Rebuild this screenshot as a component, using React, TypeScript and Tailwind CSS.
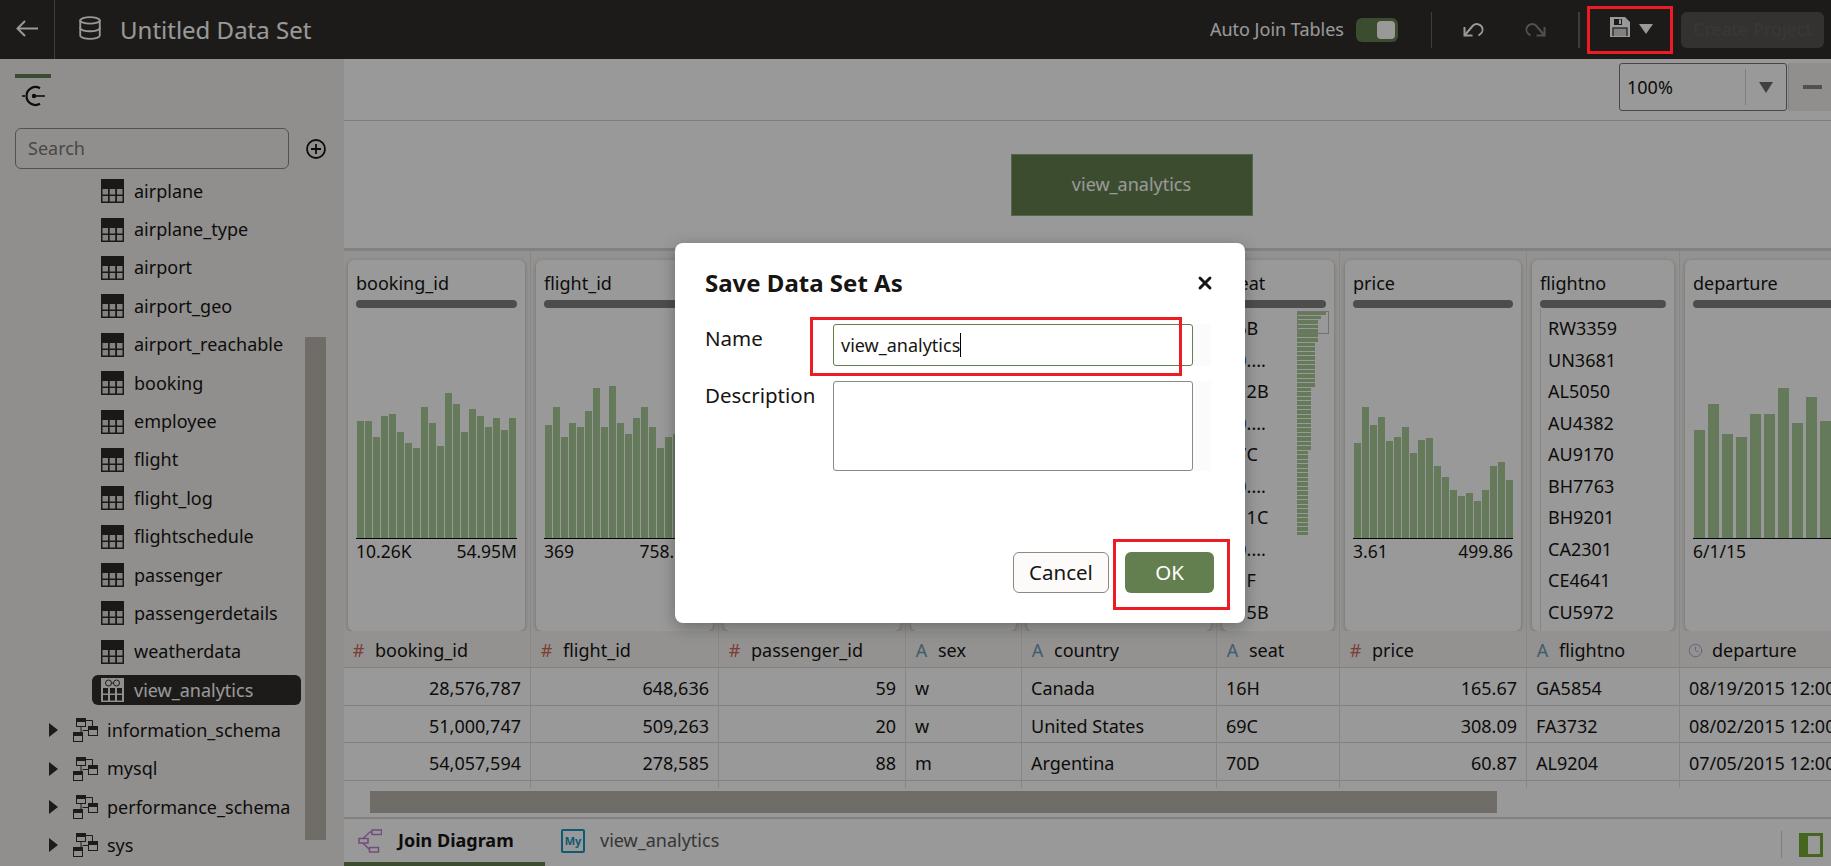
import { Clock, Database, X } from "lucide-react";

type Column = {
  name: string;
  width: string;
  type: "num" | "text" | "date";
  cells: string[];
  bars?: number[];
  barClass?: string;
  min?: string;
  max?: string;
  list?: string[];
  seat?: boolean;
};

const COLUMNS: Column[] = [
  {
    name: "booking_id",
    width: "w-[188px]",
    type: "num",
    cells: ["28,576,787", "51,000,747", "54,057,594"],
    bars: [117, 117, 101, 122, 124, 106, 95, 90, 131, 115, 92, 145, 134, 106, 129, 122, 111, 120, 108, 120],
    barClass: "w-[7px] mr-px",
    min: "10.26K",
    max: "54.95M",
  },
  {
    name: "flight_id",
    width: "w-[188px]",
    type: "num",
    cells: ["648,636", "509,263", "278,585"],
    bars: [113, 131, 101, 115, 111, 127, 150, 111, 152, 115, 104, 120, 131, 111, 90, 101, 104, 110, 98, 105],
    barClass: "w-[7px] mr-px",
    min: "369",
    max: "758.61K",
  },
  { name: "passenger_id", width: "w-[187px]", type: "num", cells: ["59", "20", "88"] },
  { name: "sex", width: "w-[116px]", type: "text", cells: ["w", "w", "m"] },
  { name: "country", width: "w-[195px]", type: "text", cells: ["Canada", "United States", "Argentina"] },
  {
    name: "seat",
    width: "w-[123px]",
    type: "text",
    cells: ["16H", "69C", "70D"],
    seat: true,
    list: ["16B", "10....", "112B", "10....", "17C", "10....", "111C", "10....", "11F", "115B"],
  },
  {
    name: "price",
    width: "w-[187px]",
    type: "num",
    cells: ["165.67", "308.09", "60.87"],
    bars: [95, 131, 113, 121, 97, 101, 111, 85, 98, 100, 72, 61, 48, 42, 45, 37, 48, 72, 76, 58],
    barClass: "w-[7px] mr-px",
    min: "3.61",
    max: "499.86",
  },
  {
    name: "flightno",
    width: "w-[153px]",
    type: "text",
    cells: ["GA5854", "FA3732", "AL9204"],
    list: ["RW3359", "UN3681", "AL5050", "AU4382", "AU9170", "BH7763", "BH9201", "CA2301", "CE4641", "CU5972"],
  },
  {
    name: "departure",
    width: "w-[300px]",
    type: "date",
    cells: ["08/19/2015 12:00:00 AM", "08/02/2015 12:00:00 AM", "07/05/2015 12:00:00 AM"],
    bars: [108, 134, 104, 101, 124, 124, 150, 115, 141, 117, 120, 104],
    barClass: "w-[11px] mr-[3px]",
    min: "6/1/15",
  },
];

const TABLES = [
  "airplane",
  "airplane_type",
  "airport",
  "airport_geo",
  "airport_reachable",
  "booking",
  "employee",
  "flight",
  "flight_log",
  "flightschedule",
  "passenger",
  "passengerdetails",
  "weatherdata",
];

const SCHEMAS = ["information_schema", "mysql", "performance_schema", "sys"];

function TableIcon() {
  return (
    <svg width="23" height="24" viewBox="0 0 23 24" className="shrink-0">
      <rect width="23" height="24" fill="#2d2a28" />
      <g fill="#f1efed" opacity="0.9">
        <rect x="1.500" y="10" width="5.500" height="5.500" />
        <rect x="8.700" y="10" width="5.500" height="5.500" />
        <rect x="16" y="10" width="5.500" height="5.500" />
        <rect x="1.500" y="17" width="5.500" height="5.500" />
        <rect x="8.700" y="17" width="5.500" height="5.500" />
        <rect x="16" y="17" width="5.500" height="5.500" />
      </g>
    </svg>
  );
}

function ViewIcon() {
  return (
    <svg width="23" height="24" viewBox="0 0 23 24" className="shrink-0">
      <rect width="23" height="24" fill="#f1efed" />
      <circle cx="7.500" cy="5" r="3" fill="none" stroke="#312d2a" />
      <circle cx="15.500" cy="5" r="3" fill="none" stroke="#312d2a" />
      <path d="M10.500 5h2" stroke="#312d2a" />
      <g fill="#312d2a">
        <rect x="2" y="10" width="5" height="5.500" />
        <rect x="9" y="10" width="5" height="5.500" />
        <rect x="16" y="10" width="5" height="5.500" />
        <rect x="2" y="17" width="5" height="5.500" />
        <rect x="9" y="17" width="5" height="5.500" />
        <rect x="16" y="17" width="5" height="5.500" />
      </g>
    </svg>
  );
}

function SchemaIcon() {
  return (
    <svg width="25" height="24" viewBox="0 0 25 24" className="shrink-0" fill="none" stroke="#312d2a">
      <rect x="3.500" y="0.500" width="9" height="8" />
      <rect x="3.500" y="0.500" width="9" height="3" fill="#312d2a" />
      <rect x="15.500" y="8.500" width="9" height="9" />
      <rect x="15.500" y="8.500" width="9" height="3" fill="#312d2a" />
      <rect x="0.500" y="14.500" width="9" height="9" />
      <rect x="0.500" y="14.500" width="9" height="3" fill="#312d2a" />
      <path d="M12.500 2.500h7v6M8 8.500v6M9.500 12.500h6" />
    </svg>
  );
}

function JoinTabIcon() {
  return (
    <svg width="24" height="24" viewBox="0 0 24 24" className="shrink-0" fill="none" stroke="#c27fd0" strokeWidth="1.500">
      <rect x="14" y="1" width="9.500" height="4.500" />
      <rect x="1" y="9.500" width="9" height="4.500" />
      <rect x="11.500" y="18.500" width="9" height="4.500" />
      <path d="M14 3h-2L5 9.500M5 14l6.500 6.500" />
    </svg>
  );
}

function UndoIcon({ flip, color }: { flip?: boolean; color: string }) {
  return (
    <svg
      width="22"
      height="15"
      viewBox="0 0 22 15"
      fill="none"
      stroke={color}
      strokeWidth="2"
      className={flip ? "-scale-x-100" : ""}
    >
      <path d="M1.500 5v8.500h8" />
      <path d="M1.500 13.500L10 3.500c3-2.500 7-1.500 9 1.500 1.500 3 0 6.500-3.500 8.500" />
    </svg>
  );
}

function FieldIcon({ type }: { type: Column["type"] }) {
  if (type === "date") return <Clock size={17} strokeWidth={1.500} className="w-[15px] text-[#b59ad0]" />;
  return (
    <span className={`w-[15px] text-center text-[18px] ${type === "num" ? "text-[#d0685a]" : "text-[#6f9ab8]"}`}>
      {type === "num" ? "#" : "A"}
    </span>
  );
}

function ChartCard({ col }: { col: Column }) {
  return (
    <div className="flex h-[371px] flex-col overflow-hidden rounded-[6px] bg-white px-[8px] pt-[12px] shadow-[0_1px_4px_rgba(0,0,0,0.25)]">
      <div className="h-[22px] whitespace-nowrap leading-[22px]">{col.name}</div>
      <div className="mt-[6px] h-[8px] shrink-0 rounded-full bg-[#808080]" />
      {col.bars && (
        <>
          <div className="flex h-[231px] shrink-0 items-end overflow-hidden border-b border-black pl-px">
            {col.bars.map((h, i) => (
              <div key={i} className={`shrink-0 bg-[#a8cc98] ${col.barClass}`} style={{ height: h }} />
            ))}
          </div>
          <div className="flex justify-between whitespace-nowrap text-[17.500px] leading-[24px]">
            <span>{col.min}</span>
            <span>{col.max}</span>
          </div>
        </>
      )}
      {col.list && (
        <div className="relative flex min-h-0 flex-1">
          <div className={`flex flex-col pt-[5px] ${col.seat ? "-ml-[4px]" : "border-l border-[#e0e0e0] pl-[7px]"}`}>
            {col.list.map((v, i) => (
              <div key={i} className="h-[31.500px] whitespace-nowrap leading-[31.500px]">
                {v}
              </div>
            ))}
          </div>
          {col.seat && <SeatBars />}
        </div>
      )}
    </div>
  );
}

function SeatBars() {
  const widths = Array.from({ length: 50 }, (_, i) =>
    i === 0 ? 29 : i === 1 ? 24 : i < 7 ? 21 : i < 17 ? 18 : i < 31 ? 14 : 11,
  );
  return (
    <div className="absolute top-[3px] left-[67px] flex flex-col">
      <div className="absolute top-0 left-0 h-[23px] w-[32px] border border-[#c0c0c0]" />
      {widths.map((w, i) => (
        <div key={i} className="mb-[1px] h-[3.500px] bg-[#a8cc98]" style={{ width: w }} />
      ))}
    </div>
  );
}

export default function App() {
  return (
    <div className="relative h-[866px] w-[1831px] overflow-hidden bg-white font-['Noto_Sans',sans-serif] text-[18px] text-[#161513]">
      {/* top bar */}
      <header className="flex h-[59px] items-center bg-[#312d2a] text-white">
        <div className="flex h-full w-[55px] items-center border-r border-[#6a6663] pb-[3px] pl-[16px]">
          <svg width="22" height="17" viewBox="0 0 22 17" fill="none" stroke="#fff" strokeWidth="2">
            <path d="M1.500 8.500H22M9 1L1.500 8.500L9 16" />
          </svg>
        </div>
        <Database size={26} strokeWidth={1.700} className="mb-[3px] ml-[22px]" />
        <span className="ml-[17px] text-[24px]">Untitled Data Set</span>
        <span className="ml-auto">Auto Join Tables</span>
        <div className="ml-[12px] flex h-[24px] w-[42px] items-center justify-end rounded-[6px] bg-[#647f4f] pr-[3px]">
          <div className="h-[18px] w-[18px] rounded-[4px] bg-white" />
        </div>
        <div className="ml-[33px] h-[36px] w-px bg-[#6a6663]" />
        <div className="ml-[31px]">
          <UndoIcon color="#fff" />
        </div>
        <div className="ml-[39px]">
          <UndoIcon flip color="#8a8785" />
        </div>
        <div className="ml-[32px] h-[36px] w-[2px] bg-[#6a6663]" />
        <svg width="20" height="20" viewBox="0 0 20 20" className="mb-[6px] ml-[30px]">
          <path fill="#fff" fillRule="evenodd" d="M0 0h15l5 5v15H0zM4 2v6h8V2z" />
          <rect x="9" y="2.500" width="2" height="4.500" fill="#fff" />
          <rect x="3" y="11" width="14" height="9" fill="#d8d8d8" stroke="#312d2a" strokeWidth="1.200" />
          <path d="M0 19h20v1H0z" fill="#fff" />
        </svg>
        <div className="mb-[1px] ml-[9px] h-0 w-0 border-x-[7px] border-t-[10px] border-x-transparent border-t-white" />
        <div className="mr-[7px] ml-[28px] flex h-[36px] w-[143px] items-center justify-center rounded-[6px] bg-[#555452] text-[#605e5c]">
          Create Project
        </div>
      </header>

      <div className="flex h-[807px]">
        {/* left panel */}
        <aside className="flex w-[344px] shrink-0 flex-col bg-[#f1efed] pt-[15px]">
          <div className="ml-[15px] h-[4px] w-[36px] bg-[#647f4f]" />
          <svg width="24" height="22" viewBox="0 0 24 22" className="mt-[7px] ml-[22px]" fill="none" stroke="#161513" strokeWidth="2.200">
            <path d="M18 3.200A9 9 0 1 0 18 18.800" />
            <circle cx="12" cy="11" r="2.200" fill="#161513" stroke="none" />
            <path d="M12 11h11" strokeWidth="1.600" />
            <path d="M0 11h3" strokeWidth="1.600" />
          </svg>
          <div className="mt-[21px] flex items-center pl-[15px]">
            <div className="flex h-[41px] w-[274px] items-center rounded-[6px] border border-[#8b8885] px-[12px] text-[#7b7876]">
              Search
            </div>
            <svg width="20" height="20" viewBox="0 0 20 20" className="ml-[17px]" fill="none" stroke="#161513" strokeWidth="1.800">
              <circle cx="10" cy="10" r="9" />
              <path d="M10 5v10M5 10h10" />
            </svg>
          </div>
          <div className="mt-[3px] flex">
            <div className="w-[305px]">
              {TABLES.map((t) => (
                <div key={t} className="flex h-[38.400px] items-center gap-[10px] pl-[101px]">
                  <TableIcon />
                  <span>{t}</span>
                </div>
              ))}
              <div className="mt-[4px] mb-[6px] ml-[92px] flex h-[30px] w-[209px] items-center gap-[10px] rounded-[6px] bg-[#312d2a] pl-[9px] text-white">
                <ViewIcon />
                <span>view_analytics</span>
              </div>
              {SCHEMAS.map((s) => (
                <div key={s} className="flex h-[38.400px] items-center pl-[49px]">
                  <div className="h-0 w-0 border-y-[7px] border-l-[9px] border-y-transparent border-l-[#312d2a]" />
                  <div className="ml-[15px]">
                    <SchemaIcon />
                  </div>
                  <span className="ml-[9px] whitespace-nowrap">{s}</span>
                </div>
              ))}
            </div>
            <div className="mt-[165px] h-[503px] w-[21px] bg-[#bbb6b0]" />
          </div>
        </aside>

        {/* main area */}
        <main className="flex min-w-0 flex-1 flex-col overflow-hidden bg-white">
          <div className="flex h-[62px] shrink-0 items-start justify-end border-b border-[#d4d2d0] pt-[4px]">
            <div className="flex h-[48px] w-[168px] items-center rounded-[3px] border border-[#7a7775] pl-[7px]">
              <span className="flex-1">100%</span>
              <div className="flex h-[36px] w-[41px] items-center justify-center border-l border-[#d4d2d0]">
                <div className="h-0 w-0 border-x-[7px] border-t-[11px] border-x-transparent border-t-[#6f6c6a]" />
              </div>
            </div>
            <div className="ml-px flex h-[48px] w-[43px] items-center rounded-l-[3px] border-l border-[#d4d2d0] bg-[#f1efed] pl-[14px]">
              <div className="h-[4px] w-[19px] bg-[#8a8785]" />
            </div>
          </div>

          <div className="flex h-[130px] shrink-0 items-center justify-center border-b-[3px] border-[#d9d7d5] pl-[88px]">
            <div className="flex h-[62px] w-[242px] items-center justify-center border border-[#8cad7b] bg-[#647f4f] text-white">
              view_analytics
            </div>
          </div>

          <div className="-ml-px flex h-[537px] shrink-0">
            {COLUMNS.map((col) => (
              <div key={col.name} className={`${col.width} flex shrink-0 flex-col border-r border-[#e4e2e0]`}>
                <div className="bg-[#f5f4f2] px-[5px] pt-[9px]">
                  <ChartCard col={col} />
                </div>
                <div className="flex h-[37px] items-center gap-[9px] border-b border-[#dad8d6] bg-[#f5f4f2] pt-[2px] pl-[8px] whitespace-nowrap">
                  <FieldIcon type={col.type} />
                  <span>{col.name}</span>
                </div>
                {col.cells.map((cell) => (
                  <div
                    key={cell}
                    className={`flex h-[37.600px] items-center border-b border-[#dad8d6] px-[9px] pt-[5px] whitespace-nowrap ${col.type === "num" ? "justify-end" : ""}`}
                  >
                    {cell}
                  </div>
                ))}
              </div>
            ))}
          </div>

          <div className="flex h-[29px] shrink-0 items-start pt-[3px] pl-[26px]">
            <div className="h-[22px] w-[1127px] bg-[#bbb6b0]" />
          </div>

          <footer className="flex flex-1 items-stretch border-t-[2px] border-[#dad8d6]">
            <div className="flex w-[201px] items-center gap-[16px] border-b-[4px] border-[#647f4f] pl-[14px] font-bold">
              <JoinTabIcon />
              <span>Join Diagram</span>
            </div>
            <div className="ml-[16px] flex items-center gap-[15px] pb-[4px]">
              <div className="flex h-[24px] w-[24px] items-center justify-center rounded-[2px] border-[2px] border-[#1796be] text-[11px] leading-[11px] font-bold text-[#1796be]">
                My
              </div>
              <span className="text-[#5c5957]">view_analytics</span>
            </div>
            <div className="mt-[12px] ml-auto h-[27px] w-px bg-[#d4d2d0]" />
            <div className="mt-[14px] mr-[8px] ml-[17px] h-[24px] w-[24px] border-[3px] border-l-[9px] border-[#75aa34] bg-white" />
          </footer>
        </main>
      </div>

      {/* modal scrim */}
      <div className="absolute inset-0 bg-black/40" />

      <div className="absolute top-[243px] left-[675px] flex h-[380px] w-[570px] flex-col rounded-[8px] bg-white pt-[25px] pr-[31px] pl-[30px] shadow-[0_4px_16px_rgba(0,0,0,0.3)]">
        <div className="flex h-[30px] items-center justify-between">
          <h2 className="text-[24px] font-bold">Save Data Set As</h2>
          <X size={20} strokeWidth={3.500} className="-mr-[1px]" />
        </div>
        <div className="mt-[26px] flex text-[20.500px]">
          <label className="w-[128px] pt-[2px] leading-[24px]">Name</label>
          <div className="flex w-[378px] bg-[#fbfbfb]">
            <div className="flex h-[42px] w-[360px] items-center rounded-[3px] border border-[#647f4f] bg-white pl-[7px] text-[18px]">
              <span>view_analytics</span>
              <div className="h-[24px] w-px bg-black" />
            </div>
          </div>
        </div>
        <div className="mt-[15px] flex text-[20.500px]">
          <label className="w-[128px] leading-[28px]">Description</label>
          <div className="flex w-[378px] bg-[#fbfbfb]">
            <div className="h-[90px] w-[360px] rounded-[3px] border border-[#8b8885] bg-white" />
          </div>
        </div>
        <div className="mt-[81px] flex items-center justify-end gap-[16px] text-[20.500px]">
          <button className="h-[41px] w-[96px] rounded-[6px] border border-[#8b8885] bg-[#fcfbfa]">Cancel</button>
          <button className="h-[41px] w-[89px] rounded-[6px] bg-[#647f4f] text-white">OK</button>
        </div>
      </div>

      {/* red annotation boxes */}
      <div className="absolute top-[6px] left-[1587px] h-[48px] w-[86px] border-[3px] border-[#ed1c24]" />
      <div className="absolute top-[317px] left-[810px] h-[59px] w-[372px] border-[3px] border-[#ed1c24]" />
      <div className="absolute top-[539px] left-[1113px] h-[71px] w-[117px] border-[3px] border-[#ed1c24]" />
    </div>
  );
}
